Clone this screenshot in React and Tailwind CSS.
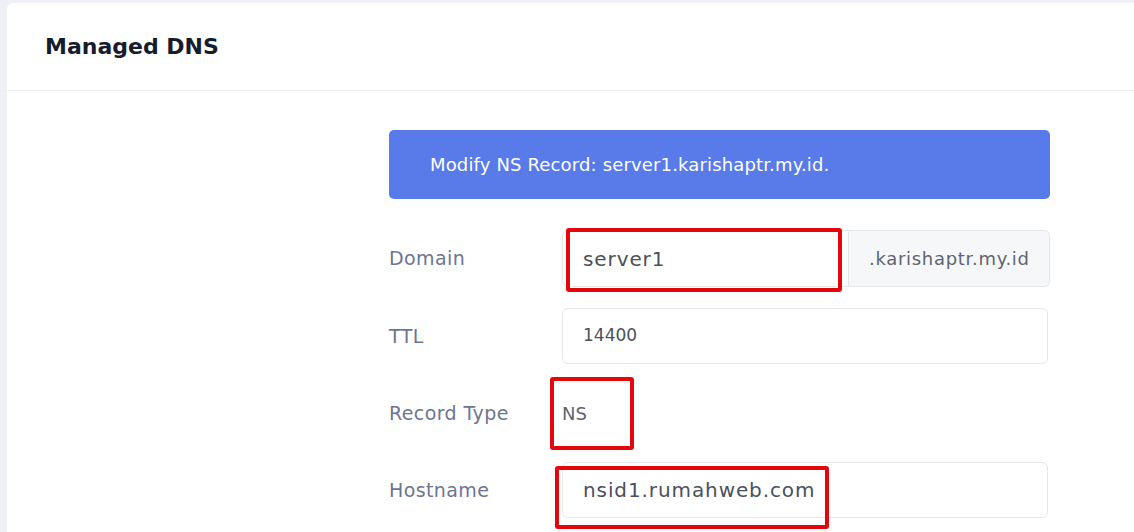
import React from "react";

const font = { fontFamily: '"DejaVu Sans", "Open Sans", sans-serif' };

function Row({ label, children }) {
  return (
    <div className="flex items-center">
      <div className="w-[173px] shrink-0 text-[19px] tracking-[0.4px] text-[#6c7592]">{label}</div>
      <div className="flex-1">{children}</div>
    </div>
  );
}

function Mark({ className }) {
  return <div className={"pointer-events-none absolute rounded-[3px] border-[4px] border-[#e3060b] " + className} />;
}

export default function App() {
  return (
    <div className="relative h-[532px] w-[1134px] overflow-hidden bg-[#eef0f5] pl-[7px] pt-[3px]" style={font}>
      <div className="h-full rounded-tl-[6px] bg-white">
        <div className="flex h-[88px] items-center border-b border-[#eceef2] pl-[38px]">
          <h1 className="text-[22px] font-bold text-[#161c2d]">Managed DNS</h1>
        </div>

        <div className="ml-[382px] w-[661px] pt-[39px]">
          <div className="flex h-[69px] items-center rounded-[5px] bg-[#587be9] pl-[41px] text-[18px] tracking-[0.15px] text-white">
            Modify NS Record: server1.karishaptr.my.id.
          </div>

          <div className="mt-[31px] flex flex-col gap-[21px]">
            <Row label="Domain">
              <div className="flex h-[57px]">
                <div className="flex flex-1 items-center rounded-l-[6px] border border-[#e4e6ea] pl-[20px] text-[20px] tracking-[0.9px] text-[#4b505a]">
                  server1
                </div>
                <div className="flex w-[201px] items-center rounded-r-[6px] border border-l-0 border-[#e4e6ea] bg-[#f6f7f9] pl-[20px] text-[18px] tracking-[0.7px] text-[#5f6470]">
                  .karishaptr.my.id
                </div>
              </div>
            </Row>
            <Row label="TTL">
              <div className="flex h-[56px] w-[486px] items-center rounded-[6px] border border-[#e4e6ea] pl-[20px] text-[17px] text-[#4b505a]">
                14400
              </div>
            </Row>
            <Row label="Record Type">
              <div className="flex h-[56px] items-center text-[18px] text-[#5f6470]">NS</div>
            </Row>
            <Row label="Hostname">
              <div className="flex h-[56px] w-[486px] items-center rounded-[6px] border border-[#e4e6ea] pl-[20px] text-[20px] tracking-[0.9px] text-[#4b505a]">
                nsid1.rumahweb.com
              </div>
            </Row>
          </div>
        </div>
      </div>

      <Mark className="left-[566px] top-[228px] h-[64px] w-[276px]" />
      <Mark className="left-[550px] top-[377px] h-[73px] w-[84px]" />
      <Mark className="left-[555px] top-[466px] h-[63px] w-[274px]" />
    </div>
  );
}
